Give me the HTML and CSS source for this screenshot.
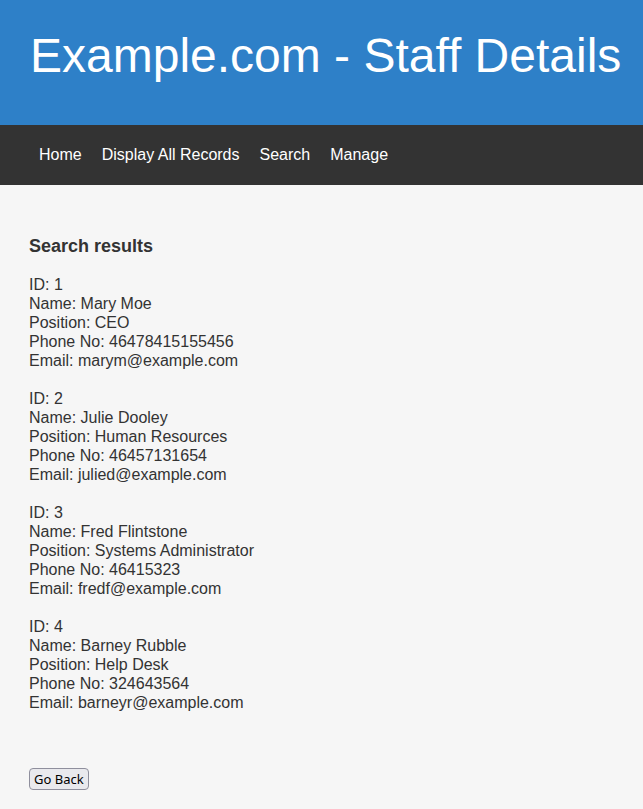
FILE: index.html
```html
<!DOCTYPE html>
<html>
<head>
<meta charset="utf-8">
<title>Staff Details</title>
<link rel="stylesheet" href="styles.css">
</head>
<body>
<header class="header">
  <h1 class="title">Example.com - Staff Details</h1>
</header>
<nav class="nav">
  <a class="nav-link" href="#">Home</a>
  <a class="nav-link" href="#">Display All Records</a>
  <a class="nav-link" href="#">Search</a>
  <a class="nav-link" href="#">Manage</a>
</nav>
<main class="content">
  <h2 class="heading">Search results</h2>
  <div class="record">ID: 1<br>Name: Mary Moe<br>Position: CEO<br>Phone No: 46478415155456<br>Email: marym@example.com</div>
  <div class="record">ID: 2<br>Name: Julie Dooley<br>Position: Human Resources<br>Phone No: 46457131654<br>Email: julied@example.com</div>
  <div class="record">ID: 3<br>Name: Fred Flintstone<br>Position: Systems Administrator<br>Phone No: 46415323<br>Email: fredf@example.com</div>
  <div class="record">ID: 4<br>Name: Barney Rubble<br>Position: Help Desk<br>Phone No: 324643564<br>Email: barneyr@example.com</div>
  <div class="actions"><button class="back" type="button">Go Back</button></div>
</main>
</body>
</html>
```

FILE: styles.css
```css
html, body {
  margin: 0;
  padding: 0;
  background: #f6f6f6;
  font-family: "Liberation Sans", Arial, sans-serif;
  color: #333;
}
.header {
  background: #2e80c8;
  height: 125px;
  box-sizing: border-box;
  padding: 28px 0 0 30px;
}
.title {
  margin: 0;
  font-size: 48px;
  font-weight: normal;
  color: #fff;
  line-height: 55px;
  white-space: nowrap;
}
.nav {
  background: #333;
  height: 60px;
  display: flex;
  align-items: center;
  padding-left: 39px;
  gap: 20px;
}
.nav-link {
  color: #fff;
  text-decoration: none;
  font-size: 16px;
}
.content {
  padding: 49px 29px 18px;
}
.heading {
  margin: 0 0 17px;
  font-size: 18px;
  font-weight: bold;
  line-height: 24px;
}
.record {
  font-size: 16px;
  line-height: 19px;
  margin-bottom: 19px;
}
.actions {
  padding-top: 37px;
}
.back {
  box-sizing: border-box;
  height: 22px;
  padding: 0 4px;
  font-family: "Noto Sans", "Open Sans", sans-serif;
  font-size: 13px;
  color: #000;
  background: #e9e9ed;
  border: 1px solid #8f8f9d;
  border-radius: 4px;
}
```
